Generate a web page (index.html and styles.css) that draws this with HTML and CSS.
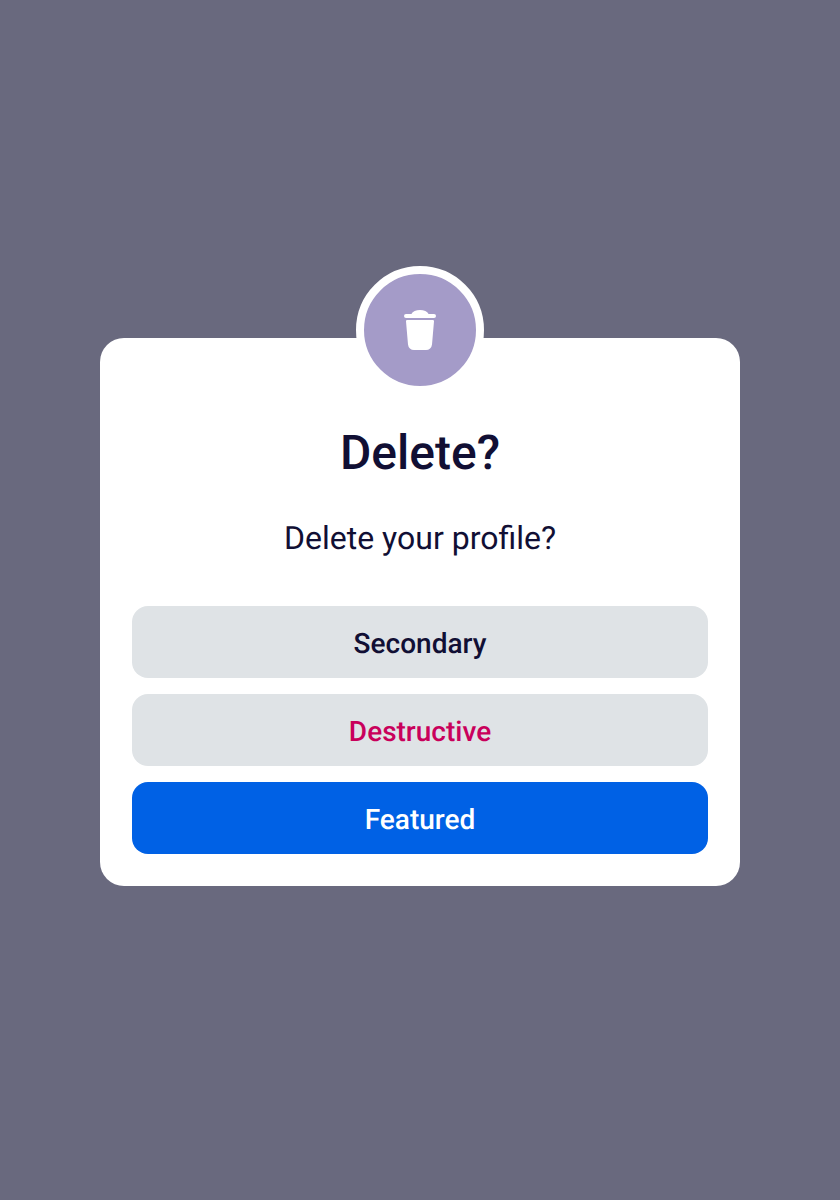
FILE: index.html
```html
<!DOCTYPE html>
<html lang="en">
<head>
<meta charset="utf-8">
<title>Delete?</title>
<link rel="stylesheet" href="styles.css">
</head>
<body>
<main class="dialog" role="dialog" aria-labelledby="dialog-title">
  <div class="badge">
    <svg class="badge-icon" viewBox="0 0 32 40" aria-hidden="true">
      <path d="M2 4H7.400C8.700 1.400 12 0 16 0s7.300 1.400 8.600 4H30a2 2 0 0 1 0 4H2a2 2 0 0 1 0-4z"/>
      <path d="M3.200 10h25.600a1.200 1.200 0 0 1 1.200 1.300L28 34.500a6 6 0 0 1-6 5.500H10a6 6 0 0 1-6-5.500L2 11.300A1.200 1.200 0 0 1 3.200 10z"/>
    </svg>
  </div>
  <h1 class="title" id="dialog-title">Delete?</h1>
  <p class="message">Delete your profile?</p>
  <div class="actions">
    <button class="button">Secondary</button>
    <button class="button destructive">Destructive</button>
    <button class="button featured">Featured</button>
  </div>
</main>
</body>
</html>
```
FILE: styles.css
```css
* { box-sizing: border-box; }
body {
  margin: 0;
  height: 1200px;
  padding-top: 338px;
  background: #69697e;
  color: #110f34;
  font-family: Roboto, sans-serif;
  text-rendering: geometricPrecision;
}
.dialog {
  width: 640px;
  height: 548px;
  margin: 0 auto;
  padding: 0 32px 32px;
  display: flex;
  flex-direction: column;
  align-items: center;
  border-radius: 24px;
  background: #fff;
}
.badge {
  flex: none;
  width: 128px;
  height: 128px;
  margin-top: -72px;
  display: flex;
  align-items: center;
  justify-content: center;
  border-radius: 50%;
  border: 8px solid #fff;
  background: #a49bc8;
}
.badge-icon { width: 32px; height: 40px; fill: #fff; }
.title {
  margin: 31px 0 0;
  font-size: 48px;
  line-height: 56px;
  font-weight: 500;
}
.message {
  margin: 35px 0 0;
  font-size: 32px;
  line-height: 44px;
}
.actions {
  width: 100%;
  margin-top: auto;
  display: flex;
  flex-direction: column;
  gap: 16px;
}
.button {
  height: 72px;
  padding: 4px 0 0;
  border: 0;
  border-radius: 16px;
  background: #dfe3e6;
  color: inherit;
  font: 500 28px/36px Roboto, sans-serif;
  text-rendering: geometricPrecision;
}
.destructive { color: #c9005b; }
.featured { background: #0061e5; color: #fff; }
```
